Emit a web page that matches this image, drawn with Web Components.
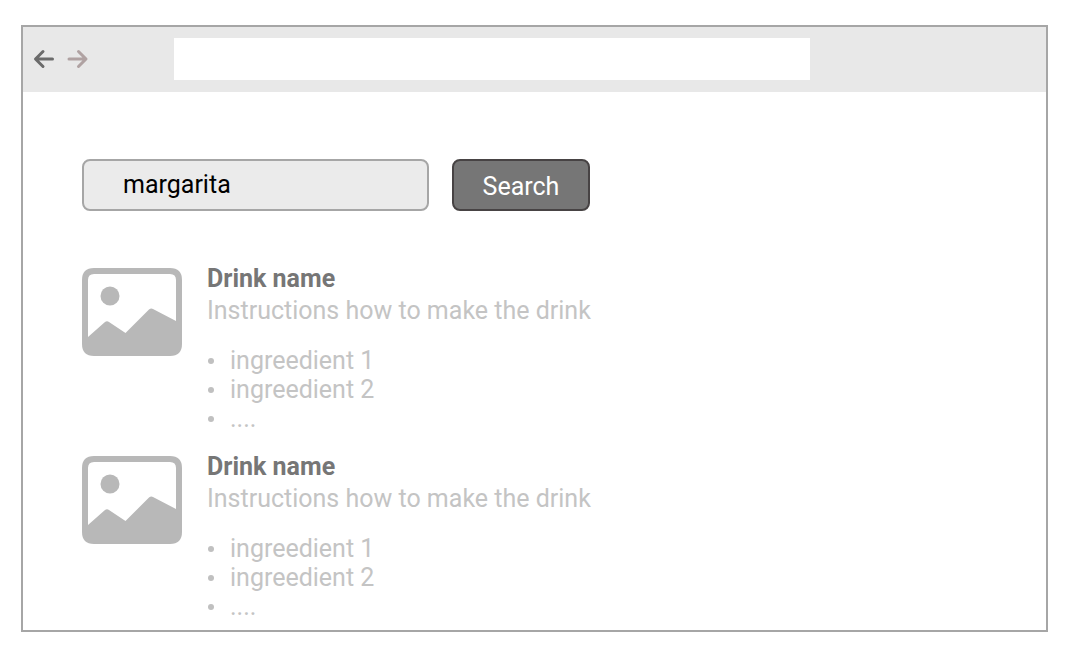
<!DOCTYPE html>
<html lang="en">
<head>
<meta charset="utf-8">
<meta name="viewport" content="width=device-width, initial-scale=1">
<title>Drink search</title>
<style>
  html, body { height: 100%; }
  body { margin: 0; background: #fff; font: 25px/32px Roboto, sans-serif; }
</style>
</head>
<body>
<browser-window>
  <drink-search value="margarita"></drink-search>
  <drink-card>
    <span slot="name">Drink name</span>
    <span slot="instructions">Instructions how to make the drink</span>
    <drink-ingredient>ingreedient 1</drink-ingredient>
    <drink-ingredient>ingreedient 2</drink-ingredient>
    <drink-ingredient>....</drink-ingredient>
  </drink-card>
  <drink-card>
    <span slot="name">Drink name</span>
    <span slot="instructions">Instructions how to make the drink</span>
    <drink-ingredient>ingreedient 1</drink-ingredient>
    <drink-ingredient>ingreedient 2</drink-ingredient>
    <drink-ingredient>....</drink-ingredient>
  </drink-card>
</browser-window>

<template id="browser-window">
  <style>
    :host { display: flex; min-height: 100%; box-sizing: border-box; padding: 25px 22px 27px 21px; }
    .frame { flex: 1; min-width: 0; border: 2px solid #a6a6a6; background: #fff; }
    header { display: flex; align-items: center; box-sizing: border-box; height: 65px; background: #e8e8e8; padding: 0 236px 2px 10px; }
    button { flex: none; display: block; border: 0; padding: 0; margin-right: 12px; background: none; width: 22px; height: 22px; }
    svg { display: block; width: 22px; height: 22px; fill: none; stroke: #6b6b6b; stroke-width: 3; stroke-linecap: round; stroke-linejoin: round; }
    .next svg { stroke: #b0a2a2; }
    input { flex: 1; min-width: 0; height: 42px; box-sizing: border-box; margin: 0 0 0 73px; border: 0; padding: 0 12px; background: #fff; font: inherit; }
    main { display: flex; flex-direction: column; gap: 18px; padding: 67px 59px 0; }
  </style>
  <div class="frame">
    <header>
      <button type="button" aria-label="Back"><svg viewBox="0 0 22 22"><path d="M19.500 11H3M10 3.500L2.500 11L10 18.500"/></svg></button>
      <button type="button" class="next" aria-label="Forward"><svg viewBox="0 0 22 22"><path d="M2 11H18M11.500 3.500L19 11L11.500 18.500"/></svg></button>
      <input type="text" aria-label="Address">
    </header>
    <main><slot></slot></main>
  </div>
</template>

<template id="drink-search">
  <style>
    :host { display: block; margin-bottom: 34px; }
    form { display: flex; gap: 23px; margin: 0; }
    input, button { box-sizing: border-box; height: 52px; margin: 0; border-radius: 8px; font: inherit; }
    input { width: 347px; min-width: 0; border: 2px solid #a6a6a6; padding: 0 39px 1px; background: #ebebeb; color: #000; }
    button { width: 138px; border: 2px solid #474344; padding: 3px 0 0; background: #767676; color: #fff; }
  </style>
  <form>
    <input type="search" aria-label="Drink">
    <button type="button">Search</button>
  </form>
</template>

<template id="drink-card">
  <style>
    :host { display: flex; gap: 25px; color: #c4c4c4; }
    svg { flex: none; width: 100px; height: 88px; margin-top: 5px; }
    h2, p { margin: 0; font: inherit; }
    h2 { font-weight: 700; color: #767676; }
    .list { margin-top: 19px; }
  </style>
  <svg viewBox="0 0 100 88" aria-hidden="true">
    <path fill="#b8b8b8" fill-rule="evenodd" d="M12 0H88Q100 0 100 12V76Q100 88 88 88H12Q0 88 0 76V12Q0 0 12 0ZM12 6Q6 6 6 12V69L23 54Q25 52.500 27 54L43.500 65L67 41.500Q69 40 71 41L94 53V12Q94 6 88 6Z"/>
    <circle cx="28" cy="28" r="9.500" fill="#b8b8b8"/>
  </svg>
  <div>
    <h2><slot name="name"></slot></h2>
    <p><slot name="instructions"></slot></p>
    <div class="list" role="list"><slot></slot></div>
  </div>
</template>

<template id="drink-ingredient">
  <style>
    :host { display: flex; align-items: center; gap: 16px; padding-left: 1px; line-height: 29px; }
    :host::before { content: ""; width: 6px; height: 6px; border-radius: 50%; background: #c0c0c0; }
  </style>
  <span><slot></slot></span>
</template>

<script>
  class TemplateElement extends HTMLElement {
    constructor() {
      super();
      const template = document.getElementById(this.localName);
      this.attachShadow({ mode: "open" }).append(template.content.cloneNode(true));
    }
  }
  class BrowserWindow extends TemplateElement {}
  class DrinkSearch extends TemplateElement {
    connectedCallback() {
      this.shadowRoot.querySelector("input").value = this.getAttribute("value") || "";
    }
  }
  class DrinkCard extends TemplateElement {}
  class DrinkIngredient extends TemplateElement {
    connectedCallback() { this.setAttribute("role", "listitem"); }
  }
  customElements.define("browser-window", BrowserWindow);
  customElements.define("drink-search", DrinkSearch);
  customElements.define("drink-card", DrinkCard);
  customElements.define("drink-ingredient", DrinkIngredient);
</script>
</body>
</html>
